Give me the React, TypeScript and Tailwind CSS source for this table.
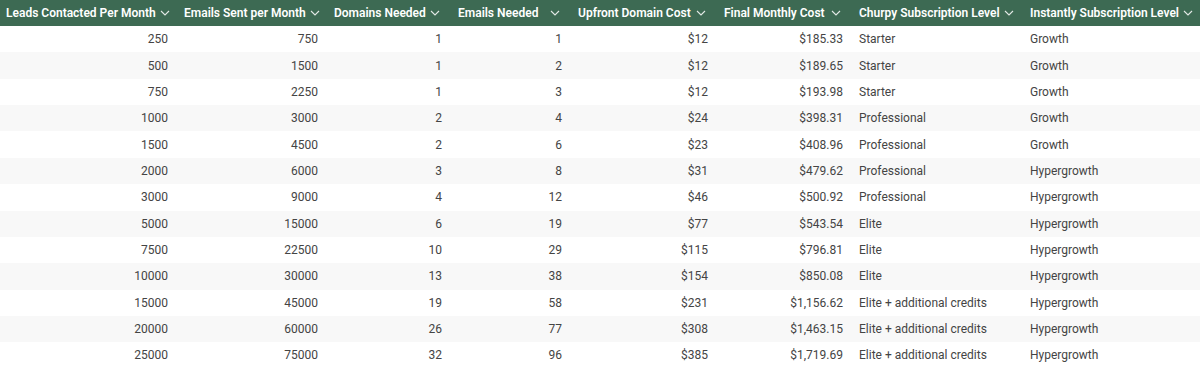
const columns = [
  { label: "Leads Contacted Per Month", width: "w-[176px]", align: "right", first: true },
  { label: "Emails Sent per Month", width: "w-[150px]", align: "right" },
  { label: "Domains Needed", width: "w-[124px]", align: "right" },
  { label: "Emails Needed", width: "w-[120px]", align: "right" },
  { label: "Upfront Domain Cost", width: "w-[146px]", align: "right" },
  { label: "Final Monthly Cost", width: "w-[135px]", align: "right" },
  { label: "Churpy Subscription Level", width: "w-[171px]", align: "left" },
  { label: "Instantly Subscription Level", width: "w-[178px]", align: "left" },
];

const rows = [
  ["250", "750", "1", "1", "$12", "$185.33", "Starter", "Growth"],
  ["500", "1500", "1", "2", "$12", "$189.65", "Starter", "Growth"],
  ["750", "2250", "1", "3", "$12", "$193.98", "Starter", "Growth"],
  ["1000", "3000", "2", "4", "$24", "$398.31", "Professional", "Growth"],
  ["1500", "4500", "2", "6", "$23", "$408.96", "Professional", "Growth"],
  ["2000", "6000", "3", "8", "$31", "$479.62", "Professional", "Hypergrowth"],
  ["3000", "9000", "4", "12", "$46", "$500.92", "Professional", "Hypergrowth"],
  ["5000", "15000", "6", "19", "$77", "$543.54", "Elite", "Hypergrowth"],
  ["7500", "22500", "10", "29", "$115", "$796.81", "Elite", "Hypergrowth"],
  ["10000", "30000", "13", "38", "$154", "$850.08", "Elite", "Hypergrowth"],
  ["15000", "45000", "19", "58", "$231", "$1,156.62", "Elite + additional credits", "Hypergrowth"],
  ["20000", "60000", "26", "77", "$308", "$1,463.15", "Elite + additional credits", "Hypergrowth"],
  ["25000", "75000", "32", "96", "$385", "$1,719.69", "Elite + additional credits", "Hypergrowth"],
];

function Chevron() {
  return (
    <svg width="10" height="6" viewBox="0 0 10 6" className="shrink-0 text-white/85">
      <polyline points="1,1 5,5 9,1" fill="none" stroke="currentColor" strokeWidth="1.1" />
    </svg>
  );
}

export default function App() {
  return (
    <div className="w-[1200px] h-[368px] overflow-hidden bg-white font-['Roboto',sans-serif] text-[12px]">
      <div className="flex h-[26px] bg-[#3d6a53] text-white font-semibold">
        {columns.map((col) => (
          <div
            key={col.label}
            className={`${col.width} ${col.first ? "pl-[6px]" : "pl-2"} pr-[10px] flex items-center justify-between gap-1`}
          >
            <span className="whitespace-nowrap">{col.label}</span>
            <Chevron />
          </div>
        ))}
      </div>
      {rows.map((row, i) => (
        <div
          key={row[0]}
          className={`flex h-[26.36px] items-center text-[#444444] ${i % 2 === 1 ? "bg-[#f8f8f8]" : "bg-white"}`}
        >
          {row.map((cell, j) => (
            <div
              key={j}
              className={`${columns[j].width} px-2 whitespace-nowrap ${columns[j].align === "right" ? "text-right" : "text-left"}`}
            >
              {cell}
            </div>
          ))}
        </div>
      ))}
    </div>
  );
}
